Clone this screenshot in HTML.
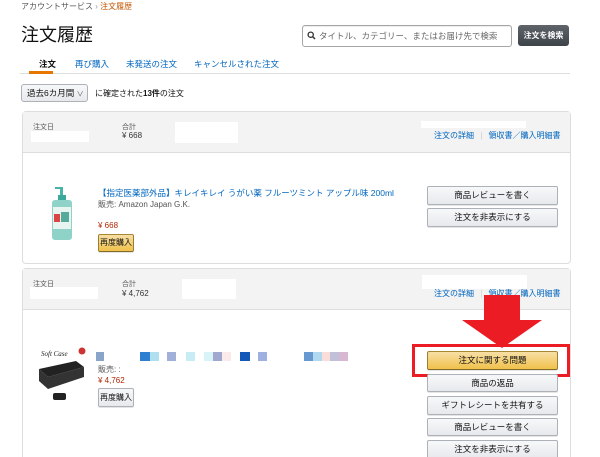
<!DOCTYPE html>
<html style="width:600px;height:457px;overflow:hidden"><head><meta charset="utf-8"><style>
*{margin:0;padding:0;box-sizing:border-box}
body{width:600px;height:457px;overflow:hidden;background:#fff;font-family:"Liberation Sans","Noto Sans CJK JP",sans-serif;color:#111;position:relative;font-size:8px}
.a{position:absolute;white-space:nowrap}
.lnk{color:#0066c0}
.btn{position:absolute;border:1px solid #adb1b8;border-radius:2px;background:linear-gradient(#f7f8fa,#e7e9ec);text-align:center;font-size:8.5px;color:#111;box-shadow:0 1px 0 rgba(0,0,0,.1)}
.yb{background:linear-gradient(#f7dfa5,#f0c14b);border-color:#a88734 #9c7e31 #846a29}
.card{position:absolute;border:1px solid #ddd;border-radius:4px;left:22px;width:549px}
.hdr{position:absolute;left:0;top:0;width:100%;background:#f3f3f3;border-bottom:1px solid #ddd}
.w{position:absolute;background:#fff}
.sq{position:absolute;top:352px;height:9px;width:9px}
</style></head><body>
<div class="a" style="left:21px;top:1px;font-size:8px;color:#555">アカウントサービス <span style="color:#999">›</span> <span style="color:#c45500">注文履歴</span></div>
<div class="a" style="left:21px;top:21px;font-size:18px;color:#111">注文履歴</div>
<div class="a" style="left:302px;top:25px;width:210px;height:22px;border:1px solid #a6a6a6;border-radius:3px;box-shadow:inset 0 1px 0 rgba(0,0,0,.07)"></div>
<svg class="a" style="left:307px;top:31px" width="9" height="9" viewBox="0 0 9 9"><circle cx="3.7" cy="3.7" r="2.6" fill="none" stroke="#333" stroke-width="1.3"/><path d="M5.6 5.6L8 8" stroke="#333" stroke-width="1.5"/></svg>
<div class="a" style="left:319px;top:30px;font-size:8.5px;color:#666">タイトル、カテゴリー、またはお届け先で検索</div>
<div class="a" style="left:518px;top:25px;width:51px;height:21px;background:linear-gradient(#5f646b,#3e434a);border-radius:3px;color:#fff;font-size:8px;font-weight:bold;text-align:center;line-height:21px">注文を検索</div>
<div class="a" style="left:39px;top:58px;font-size:8.5px;font-weight:bold">注文</div>
<div class="a lnk" style="left:75px;top:58px;font-size:8.5px">再び購入</div>
<div class="a lnk" style="left:126px;top:58px;font-size:8.5px">未発送の注文</div>
<div class="a lnk" style="left:194px;top:58px;font-size:8.5px">キャンセルされた注文</div>
<div class="a" style="left:20px;top:73px;width:550px;height:1px;background:#ddd"></div>
<div class="a" style="left:29px;top:71px;width:24px;height:3px;background:#e77600"></div>
<div class="a" style="left:21px;top:84px;width:67px;height:18px;border:1px solid #adb1b8;border-radius:3px;background:linear-gradient(#f7f8fa,#e7e9ec);font-size:8.5px;line-height:16px;padding-left:5px">過去6カ月間 <span style="font-size:7px;color:#555">&#8744;</span></div>
<div class="a" style="left:95px;top:88px;font-size:8px">に確定された<b>13件</b>の注文</div>

<div class="card" style="top:111px;height:153px">
 <div class="hdr" style="height:41px"></div>
</div>
<div class="a" style="left:33px;top:122px;font-size:7px;color:#555">注文日</div>
<div class="w" style="left:31px;top:131px;width:58px;height:11px"></div>
<div class="a" style="left:122px;top:122px;font-size:7px;color:#555">合計</div>
<div class="a" style="left:122px;top:131px;font-size:8px;color:#333">¥ 668</div>
<div class="w" style="left:175px;top:122px;width:63px;height:21px"></div>
<div class="w" style="left:421px;top:121px;width:105px;height:7px"></div>
<div class="a lnk" style="left:434px;top:130px;font-size:8px">注文の詳細 <span style="color:#ccc;margin:0 4px">|</span> 領収書／購入明細書</div>
<svg class="a" style="left:50px;top:187px" width="24" height="54" viewBox="0 0 24 54"><rect x="10" y="0" width="3" height="8" fill="#4ab3a8"/><rect x="5" y="0" width="8" height="2" fill="#4ab3a8"/><rect x="8" y="8" width="8" height="5" fill="#3ba89c"/><rect x="2" y="13" width="20" height="40" rx="3" fill="#8fd3c8"/><rect x="3" y="20" width="18" height="22" fill="#e8f4f0"/><rect x="4" y="27" width="6" height="8" fill="#d44"/><rect x="11" y="25" width="8" height="10" fill="#5a9"/></svg>
<div class="a lnk" style="left:98px;top:187px;font-size:8.5px">【指定医薬部外品】キレイキレイ うがい薬 フルーツミント アップル味 200ml</div>
<div class="a" style="left:98px;top:199px;font-size:8px;color:#555">販売: Amazon Japan G.K.</div>
<div class="a" style="left:98px;top:221px;font-size:8px;color:#b12704">¥ 668</div>
<div class="btn yb" style="left:98px;top:234px;width:36px;height:18px;line-height:16px;font-size:8px">再度購入</div>
<div class="btn" style="left:427px;top:186px;width:131px;height:19px;line-height:17px">商品レビューを書く</div>
<div class="btn" style="left:427px;top:208px;width:131px;height:19px;line-height:17px">注文を非表示にする</div>

<div class="card" style="top:268px;height:200px">
 <div class="hdr" style="height:41px"></div>
</div>
<div class="a" style="left:33px;top:279px;font-size:7px;color:#555">注文日</div>
<div class="w" style="left:30px;top:287px;width:68px;height:12px"></div>
<div class="a" style="left:122px;top:279px;font-size:7px;color:#555">合計</div>
<div class="a" style="left:122px;top:289px;font-size:8px;color:#333">¥ 4,762</div>
<div class="w" style="left:182px;top:279px;width:54px;height:20px"></div>
<div class="w" style="left:422px;top:275px;width:105px;height:14px"></div>
<div class="a lnk" style="left:434px;top:288px;font-size:8px">注文の詳細 <span style="color:#ccc;margin:0 4px">|</span> 領収書／購入明細書</div>
<svg class="a" style="left:36px;top:343px" width="50" height="64" viewBox="0 0 50 64"><text x="5" y="13" font-size="7" font-style="italic" font-family="Liberation Serif,serif" fill="#222">Soft Case</text><circle cx="46" cy="8" r="3.5" fill="#c33"/><path d="M3 26 L40 18 L48 24 L12 34Z" fill="#222"/><path d="M12 34 L48 24 L48 34 L12 46 L3 38 L3 26Z" fill="#333"/><rect x="17" y="50" width="13" height="7" rx="2" fill="#222"/></svg>
<div class="sq" style="left:96px;width:8px;background:#88a4c8"></div>
<div class="sq" style="left:140px;width:10px;background:#2d7fd0"></div>
<div class="sq" style="left:150px;background:#b0e0f0"></div>
<div class="sq" style="left:167px;background:#a0b0d8"></div>
<div class="sq" style="left:186px;background:#c8ecf5"></div>
<div class="sq" style="left:204px;background:#d8f4f8"></div>
<div class="sq" style="left:213px;background:#a0a8d0"></div>
<div class="sq" style="left:222px;background:#fbeaea"></div>
<div class="sq" style="left:240px;width:10px;background:#1358b8"></div>
<div class="sq" style="left:258px;background:#a0b0e0"></div>
<div class="sq" style="left:304px;background:#6898d0"></div>
<div class="sq" style="left:313px;background:#b0d8f0"></div>
<div class="sq" style="left:322px;background:#fadcd8"></div>
<div class="sq" style="left:330px;background:#c0c0d8"></div>
<div class="sq" style="left:339px;background:#d8b8d0"></div>
<div class="a" style="left:98px;top:364px;font-size:8px;color:#555">販売: :</div>
<div class="a" style="left:98px;top:376px;font-size:8px;color:#b12704">¥ 4,762</div>
<div class="btn" style="left:98px;top:388px;width:36px;height:19px;line-height:17px;font-size:8px">再度購入</div>
<div class="btn yb" style="left:427px;top:351px;width:131px;height:19px;line-height:17px">注文に関する問題</div>
<div class="a" style="left:412px;top:344px;width:158px;height:33px;border:3px solid #ec1c24"></div>
<div class="btn" style="left:427px;top:374px;width:131px;height:18px;line-height:16px">商品の返品</div>
<div class="btn" style="left:427px;top:396px;width:131px;height:19px;line-height:17px">ギフトレシートを共有する</div>
<div class="btn" style="left:427px;top:418px;width:131px;height:18px;line-height:16px">商品レビューを書く</div>
<div class="btn" style="left:427px;top:440px;width:131px;height:19px;line-height:17px">注文を非表示にする</div>
<svg class="a" style="left:460px;top:294px" width="84" height="56" viewBox="0 0 84 56"><path d="M24 1 H60 V26 H82 L42 54 L2 26 H24Z" fill="#ec1c24"/></svg>
</body></html>
